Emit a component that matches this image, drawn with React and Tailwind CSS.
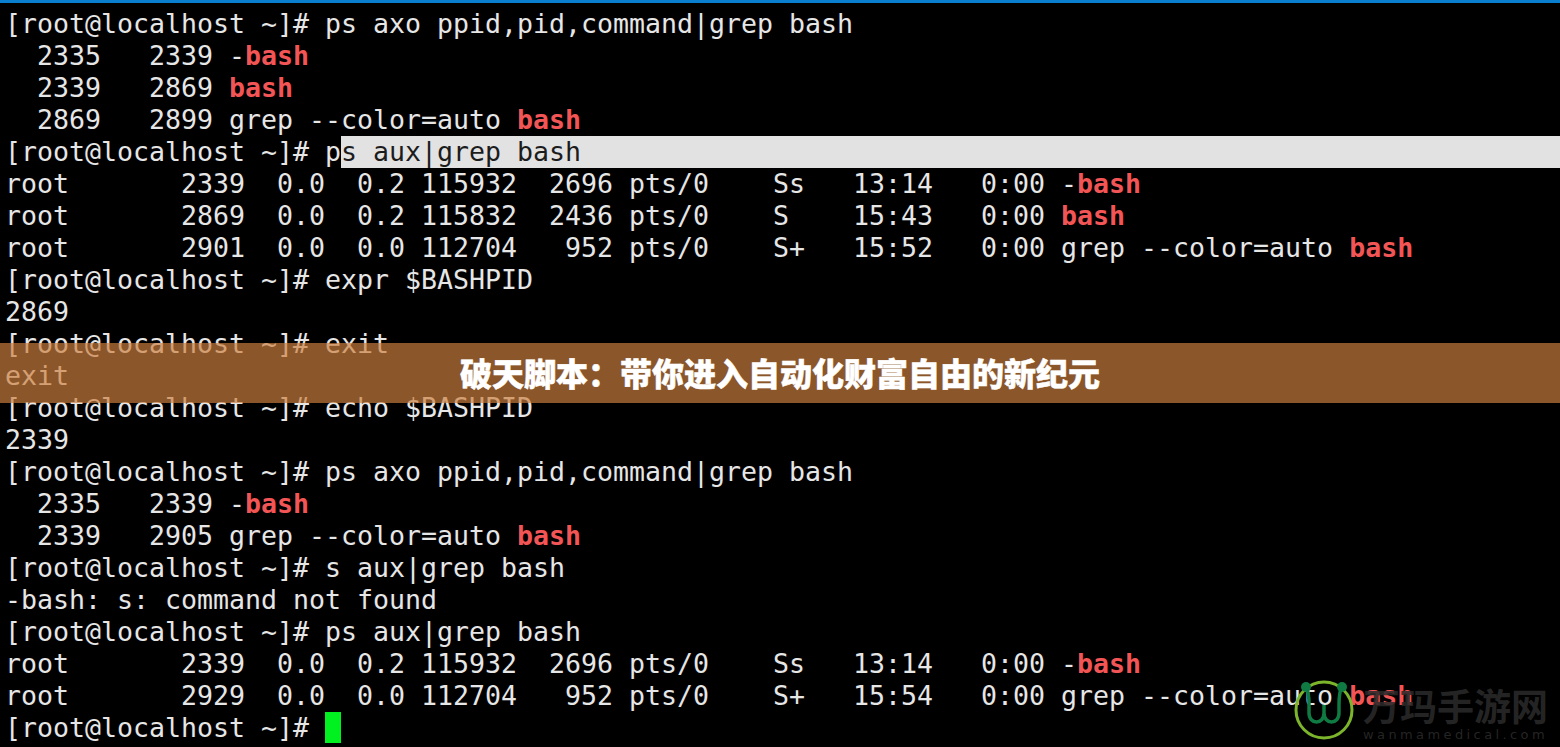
const R = ({ children }) => <span className="font-bold text-[#f25555]">{children}</span>;

const lines = [
  ["[root@localhost ~]# ps axo ppid,pid,command|grep bash"],
  ["  2335   2339 -", <R>bash</R>],
  ["  2339   2869 ", <R>bash</R>],
  ["  2869   2899 grep --color=auto ", <R>bash</R>],
  null,
  ["root       2339  0.0  0.2 115932  2696 pts/0    Ss   13:14   0:00 -", <R>bash</R>],
  ["root       2869  0.0  0.2 115832  2436 pts/0    S    15:43   0:00 ", <R>bash</R>],
  ["root       2901  0.0  0.0 112704   952 pts/0    S+   15:52   0:00 grep --color=auto ", <R>bash</R>],
  ["[root@localhost ~]# expr $BASHPID"],
  ["2869"],
  ["[root@localhost ~]# exit"],
  ["exit"],
  ["[root@localhost ~]# echo $BASHPID"],
  ["2339"],
  ["[root@localhost ~]# ps axo ppid,pid,command|grep bash"],
  ["  2335   2339 -", <R>bash</R>],
  ["  2339   2905 grep --color=auto ", <R>bash</R>],
  ["[root@localhost ~]# s aux|grep bash"],
  ["-bash: s: command not found"],
  ["[root@localhost ~]# ps aux|grep bash"],
  ["root       2339  0.0  0.2 115932  2696 pts/0    Ss   13:14   0:00 -", <R>bash</R>],
  ["root       2929  0.0  0.0 112704   952 pts/0    S+   15:54   0:00 grep --color=auto ", <R>bash</R>],
];

function Line({ children }) {
  return <div className="h-8 pl-[5px] whitespace-pre">{children}</div>;
}

function Logo() {
  return (
    <svg className="absolute left-[1294px] top-[677px]" width="60" height="60" viewBox="0 0 60 60" fill="none">
      <circle cx="30" cy="30" r="28" stroke="#7cb52b" strokeWidth="3" />
      <path d="M12 7c2 3 3 8 3 18v8c0 12 15 12 15 0v-8 8c0 12 15 12 15 0v-8c0-10 1-15 3-18" stroke="#0f7a42" strokeWidth="3.5" />
      <circle cx="12" cy="7" r="5" fill="#0f7a42" />
      <circle cx="48" cy="7" r="5" fill="#0f7a42" />
    </svg>
  );
}

export default function App() {
  return (
    <div className="relative h-[747px] w-[1560px] overflow-hidden bg-black border-t-[3px] border-[#0a7fd0] font-['DejaVu_Sans_Mono',monospace] text-[26.58px] leading-8 text-[#e6e6e6]">
      <div className="pt-[5px]">
        {lines.map((l, i) =>
          l ? (
            <Line key={i}>{l}</Line>
          ) : (
            <div key={i} className="flex h-8 pl-[5px] whitespace-pre">
              <span>[root@localhost ~]# p</span>
              <span className="flex-1 bg-[#e2e2e2] text-[#1c1c1c]">s aux|grep bash</span>
            </div>
          )
        )}
        <Line>
          [root@localhost ~]# <span className="inline-block h-[31px] w-4 bg-[#00f020] align-top" />
        </Line>
      </div>

      <div className="absolute left-0 top-[340px] flex h-[60px] w-full items-center justify-center bg-[#cd7f3e]/[0.68] pb-[3px] font-['Noto_Sans_CJK_SC',sans-serif] text-[32px] font-black text-white [-webkit-text-stroke:0.5px_white]">
        破天脚本：带你进入自动化财富自由的新纪元
      </div>

      <Logo />
      <div className="absolute left-[1363px] top-[680px] flex flex-col items-center font-['Noto_Sans_CJK_SC',sans-serif] text-[#2a2a2a]/90">
        <span className="text-[37px] leading-[44px] font-bold">万玛手游网</span>
        <span className="font-['DejaVu_Sans',sans-serif] text-[13px] leading-4 tracking-[3.4px]">wanmamedical.com</span>
      </div>
    </div>
  );
}
